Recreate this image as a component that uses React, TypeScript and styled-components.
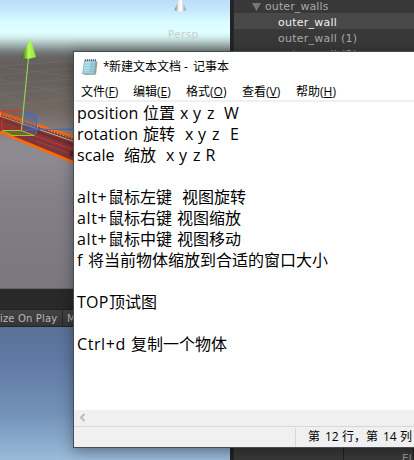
import React from "react";
import styled, { createGlobalStyle } from "styled-components";

const Global = createGlobalStyle`
  * { box-sizing: border-box; }
  html, body { margin: 0; padding: 0; overflow: hidden; background: #383838; }
`;

const Desktop = styled.div`
  position: relative;
  width: 414px;
  height: 460px;
  overflow: hidden;
  display: grid;
  grid-template-columns: 230px 4px 1fr;
  background: #383838;
  font-family: "DejaVu Sans", sans-serif;
`;

const Views = styled.div`
  display: flex;
  flex-direction: column;
  overflow: hidden;
`;

const Scene = styled.div`
  height: 289px;
  flex: none;
  position: relative;
  overflow: hidden;
  border-bottom: 1px solid #656166;
  background: linear-gradient(#bddcfa 0px, #c3e8fd 10px, #d8fbff 21px, #e0ffff 32px,
    #d3f0f0 37px, #b5caca 42px, #93a2a1 47px, #757b7a 52px, #676563 57px, #635e5c 66px, #68615e 82px, #726963 110px,
    #8e8a91 143px, #8c8992 160px, #827f88 200px, #7a777f 289px);
`;

const SceneArt = styled.svg`
  display: block;
`;

const PerspLabel = styled.span`
  position: absolute;
  left: 168px;
  top: 27px;
  font-size: 10.5px;
  line-height: 14px;
  letter-spacing: 0.3px;
  color: #c6cfd0;
`;

const TabStrip = styled.div`
  height: 21px;
  flex: none;
  background: #292929;
  border-bottom: 1px solid #202020;
`;

const ViewToolbar = styled.div`
  height: 17px;
  flex: none;
  display: flex;
  background: linear-gradient(#434343, #353535);
  border-bottom: 1px solid #242424;
  color: #b8b8b8;
  font-size: 10px;
  line-height: 17px;
  white-space: nowrap;
`;

const ToolItem = styled.div<{ $width: number; $spacing: number }>`
  width: ${(p) => p.$width}px;
  letter-spacing: ${(p) => p.$spacing}px;
  border-right: 1px solid #252525;
  padding-left: ${(p) => (p.$width > 60 ? 0 : 4)}px;
  overflow: hidden;
`;

const GameView = styled.div`
  flex: 1;
  background: linear-gradient(#5a7197, #607aa5 35px, #7190b7 85px, #9abbd9 133px);
`;

const Splitter = styled.div`
  background: linear-gradient(90deg, #282828, #202020 50%, #292929);
`;

const Hierarchy = styled.div`
  display: flex;
  flex-direction: column;
  justify-content: space-between;
  overflow: hidden;
`;

const TreeRow = styled.div<{ $selected?: boolean; $depth: number }>`
  height: 16px;
  display: flex;
  align-items: center;
  gap: 4px;
  padding-top: 3px;
  padding-left: ${(p) => p.$depth}px;
  background: ${(p) => (p.$selected ? "#484848" : "transparent")};
  color: ${(p) => (p.$selected ? "#f0f0f0" : "#a8a8a8")};
  font-size: 11px;
  line-height: 13px;
  letter-spacing: ${(p) => (p.$depth > 20 ? 0.25 : 0.1)}px;
`;

const TreeTop = styled.div`
  height: 13px;
  display: flex;
  flex-direction: column;
  justify-content: flex-end;
`;

const Tree = styled.div`
  height: 61px;
`;

const Inspector = styled.div`
  height: 20px;
  display: grid;
  grid-template-columns: 110px 1fr;
`;

const InspectorCell = styled.div`
  border-right: 1px solid #202020;
  padding: 13px 0 0 58px;
  font-size: 10px;
  line-height: 12px;
  letter-spacing: 0.4px;
  color: #999;
`;

const Notepad = styled.div`
  position: absolute;
  left: 73px;
  top: 51px;
  width: 360px;
  height: 397px;
  display: flex;
  flex-direction: column;
  border: 1px solid #454c54;
  background: #fff;
  color: #000;
  font-family: "Open Sans", "Noto Sans CJK SC", sans-serif;
  box-shadow: 0 3px 13px rgba(0, 0, 0, 0.38);
`;

const TitleBar = styled.div`
  height: 29px;
  display: flex;
  align-items: center;
  padding-left: 8px;
  gap: 5px;
  font-size: 12px;
  line-height: 29px;
  white-space: pre;
`;

const MenuBar = styled.div`
  height: 21px;
  display: flex;
  padding-left: 7px;
  border-bottom: 2px solid #f0f0f0;
  font-size: 12px;
  line-height: 21px;
`;

const MenuItem = styled.div<{ $width: number }>`
  width: ${(p) => p.$width}px;
  flex: none;
  white-space: nowrap;
`;

const Key = styled.span`
  text-decoration: underline;
  text-underline-offset: 1px;
  text-decoration-thickness: 1px;
`;

const Editor = styled.div`
  flex: 1;
  padding: 1px 0 0 3px;
  font-size: 16px;
`;

const Line = styled.div`
  height: 21px;
  line-height: 21px;
  display: flex;
  white-space: pre;
`;

const Run = styled.span<{ $width: number; $spacing: number }>`
  width: ${(p) => p.$width}px;
  flex: none;
  letter-spacing: ${(p) => p.$spacing}px;
`;

const ScrollTrack = styled.div`
  height: 17px;
  flex: none;
  padding: 3px 0 0 4px;
  background: #f0f0f0;
  border-bottom: 1px solid #d7d7d7;
`;

const Chevron = styled.svg`
  display: block;
`;

const StatusBar = styled.div`
  height: 20px;
  flex: none;
  padding: 1px 0 0 221px;
  display: flex;
  background: #f0f0f0;
`;

const Position = styled.div`
  border-left: 1px solid #d7d7d7;
  padding-left: 12px;
  display: flex;
  font-size: 12px;
  line-height: 18px;
  white-space: pre;
`;

type Piece = [text: string, width: number, spacing?: number];

const lines: Piece[][] = [
  [["position", 66, 0.15], ["位置", 37], ["x", 13], ["y", 14], ["z", 17], ["W", 20]],
  [["rotation", 66, 0.15], ["旋转", 42], ["x", 13], ["y", 14], ["z", 18], ["E", 12]],
  [["scale", 47, 0.1], ["缩放", 42], ["x", 13], ["y", 14], ["z", 12.5], ["R", 12]],
  [],
  [["alt+", 31, 0.6], ["鼠标左键", 74], ["视图旋转", 64]],
  [["alt+", 31, 0.6], ["鼠标右键", 69], ["视图缩放", 64]],
  [["alt+", 31, 0.6], ["鼠标中键", 69], ["视图移动", 64]],
  [["f", 11], ["将当前物体缩放到合适的窗口大小", 240]],
  [],
  [["TOP", 32, 0.3], ["顶试图", 48]],
  [],
  [["Ctrl+d", 54, 0.6], ["复制一个物体", 96]],
];

const menus: [string, string, number][] = [
  ["文件", "F", 52],
  ["编辑", "E", 53],
  ["格式", "O", 56],
  ["查看", "V", 54],
  ["帮助", "H", 50],
];

const NoteIcon = () => (
  <svg width="16" height="18" viewBox="0 0 16 18">
    <path d="M13 3 L15.5 4 L14 16.5 L3 17 L2 15Z" fill="#a79b82" />
    <path d="M2.7 2.2H14L12.3 16H0.6Z" fill="#9ccfdd" stroke="#78a5b2" strokeWidth=".7" />
    <path d="M3.2 3.4H9L7 14H1.5Z" fill="#c9e9f0" opacity=".75" />
    <path d="M3 6H13M2.6 8.5H12.7M2.2 11H12.4M1.8 13.3H12" stroke="#73b4c9" strokeWidth=".6" />
    <path d="M3 2.2H15" stroke="#52636a" strokeWidth="2" strokeDasharray="1 1" />
  </svg>
);

const SceneDrawing = () => (
  <SceneArt width="230" height="288" viewBox="0 0 230 288">
    <defs>
      <linearGradient id="cone" x1="0" x2="1">
        <stop offset="0" stopColor="#2f4e16" />
        <stop offset=".3" stopColor="#71bd2c" />
        <stop offset=".5" stopColor="#b4ff55" />
        <stop offset="1" stopColor="#8fdc3c" />
      </linearGradient>
      <linearGradient id="gizmo" x1="0" x2="1">
        <stop offset="0" stopColor="#777" />
        <stop offset=".35" stopColor="#eee" />
        <stop offset=".6" stopColor="#fff" />
        <stop offset="1" stopColor="#888" />
      </linearGradient>
    </defs>
    <g stroke="#8c857e" strokeWidth=".7" opacity=".35" fill="none">
      <path d="M0 66L74 61M0 75L74 68M0 84L74 79M0 94L74 87M0 106L74 98M0 67L74 77M0 79L74 96M0 94L74 118" />
    </g>
    <path d="M0 112L74 137V162L0 131Z" fill="#81343a" />
    <path d="M0 119L74 145" stroke="#73292e" strokeWidth="2" />
    <path d="M0 112.8L74 137M0 132L74 162.5" stroke="#ff6a00" strokeWidth="2.6" />
    <path d="M0 114.5L74 139" stroke="#ded7c6" strokeWidth="1" strokeDasharray="1 2" />
    <path d="M0 116L74 141.5" stroke="#a4c69a" strokeWidth="1" />
    <path d="M34 135.5L74 150" stroke="#c93a2a" strokeWidth="1" />
    <path d="M36 141L68 153" stroke="#94503e" strokeWidth=".8" />
    <path d="M22.5 111L36.5 115V135L22.5 129Z" fill="#4f67a2" opacity=".5" />
    <path d="M24 111.5L36.5 115V134.5M22 130.5L34 129.3H74" stroke="#3969d2" fill="none" />
    <path d="M2.5 110.5H22.5V130.5H1.5Z" fill="#9e4036" opacity=".3" />
    <path d="M22 110.5H2.5L1.5 130" fill="none" stroke="#d83a20" />
    <path d="M2 130.5H21L34.5 135.5H12Z" fill="#798029" fillOpacity=".6" stroke="#99c536" strokeWidth="1" />
    <path d="M28.5 57L21.5 130" stroke="#93d950" strokeWidth="1.1" />
    <path d="M30.5 39L36 57Q28 60 21 57.5Z" fill="url(#cone)" />
    <path d="M178.5 0H182L186 10Q180 13.5 174.5 10Z" fill="url(#gizmo)" />
    <path d="M70 151L74 149V157L70 156Z" fill="#741c17" />
  </SceneArt>
);

export default function App() {
  return (
    <>
      <Global />
      <Desktop>
        <Views>
          <Scene>
            <SceneDrawing />
            <PerspLabel>Persp</PerspLabel>
          </Scene>
          <TabStrip />
          <ViewToolbar>
            <ToolItem $width={63} $spacing={0.15}>ize On Play</ToolItem>
            <ToolItem $width={50} $spacing={0}>M</ToolItem>
          </ViewToolbar>
          <GameView />
        </Views>
        <Splitter />
        <Hierarchy>
          <Tree>
            <TreeTop>
              <TreeRow $depth={18}>
                <svg width="9" height="8"><path d="M0 0H9L4.5 8Z" fill="#777" /></svg>
                outer_walls
              </TreeRow>
            </TreeTop>
            <TreeRow $depth={44} $selected>outer_wall</TreeRow>
            <TreeRow $depth={44}>outer_wall (1)</TreeRow>
            <TreeRow $depth={44}>outer_wall (2)</TreeRow>
          </Tree>
          <Inspector>
            <InspectorCell />
            <InspectorCell>El</InspectorCell>
          </Inspector>
        </Hierarchy>
        <Notepad>
          <TitleBar>
            <NoteIcon />
            <Line>
              <Run $width={6} $spacing={0}>*</Run>
              <Run $width={72} $spacing={0}>新建文本文档</Run>
              <Run $width={12} $spacing={0}> - </Run>
              <Run $width={36} $spacing={0}>记事本</Run>
            </Line>
          </TitleBar>
          <MenuBar>
            {menus.map(([name, key, width]) => (
              <MenuItem key={key} $width={width}>
                {name}(<Key>{key}</Key>)
              </MenuItem>
            ))}
          </MenuBar>
          <Editor>
            {lines.map((line, i) => (
              <Line key={i}>
                {line.map(([text, width, spacing], j) => (
                  <Run key={j} $width={width} $spacing={spacing ?? 0}>{text}</Run>
                ))}
              </Line>
            ))}
          </Editor>
          <ScrollTrack>
            <Chevron width="8" height="9">
              <path d="M6.5 1L3 4.5L6.5 8" fill="none" stroke="#bcbcbc" strokeWidth="2" />
            </Chevron>
          </ScrollTrack>
          <StatusBar>
            <Position>
              <Run $width={17} $spacing={0}>第</Run>
              <Run $width={17} $spacing={0}>12</Run>
              <Run $width={24} $spacing={0}>行，</Run>
              <Run $width={17} $spacing={0}>第</Run>
              <Run $width={17} $spacing={0}>14</Run>
              <Run $width={12} $spacing={0}>列</Run>
            </Position>
          </StatusBar>
        </Notepad>
      </Desktop>
    </>
  );
}
